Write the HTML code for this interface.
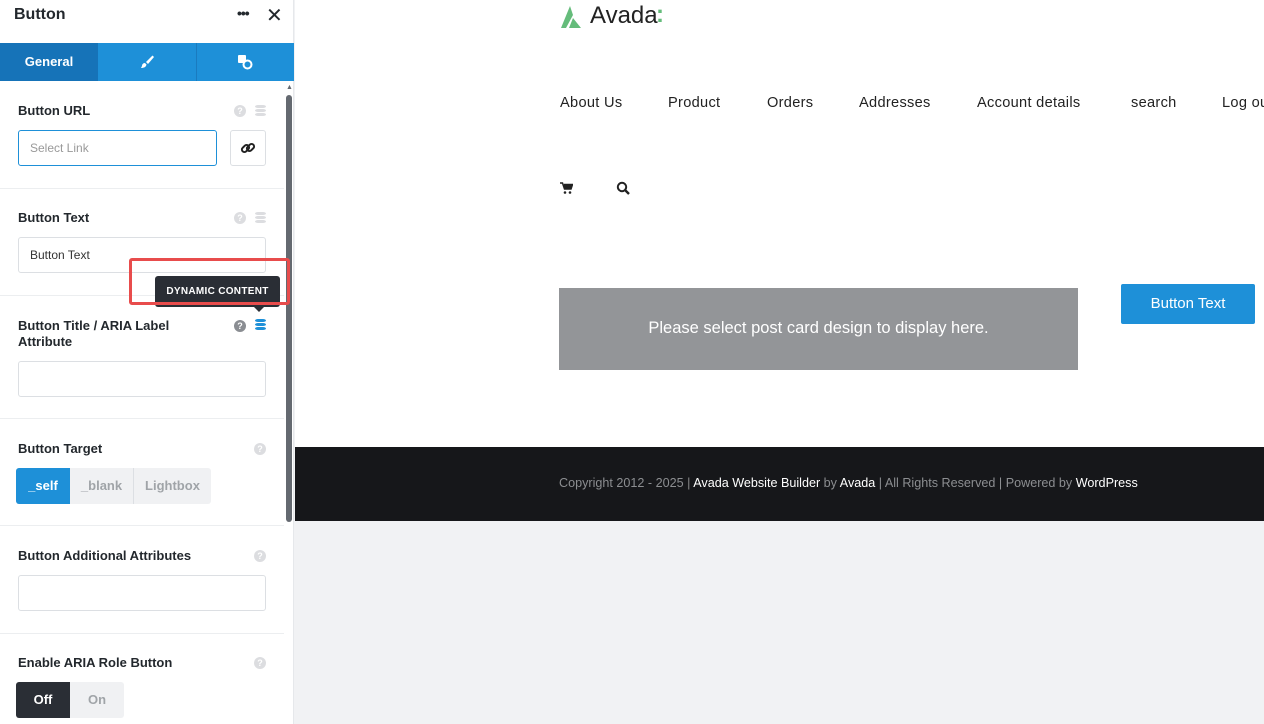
<!DOCTYPE html>
<html><head><meta charset="utf-8"><style>
*{box-sizing:border-box;margin:0;padding:0}
body{width:1264px;height:724px;overflow:hidden;font-family:"Liberation Sans",sans-serif;background:#f1f2f4;position:relative}
.panel{position:absolute;left:0;top:0;width:294px;height:724px;background:#fff;border-right:1px solid #e6e8eb}
.a{position:absolute}
.lbl{position:absolute;left:18px;font-size:13px;font-weight:bold;color:#23282d}
.inp{position:absolute;left:18px;width:248px;height:36px;border:1px solid #dcdfe3;border-radius:3px;background:#fff;font-size:12px;color:#333;padding:10px 11px}
.sep{position:absolute;left:0;width:284px;height:1px;background:#eceef0}
.q{position:absolute;width:12px;height:12px;border-radius:50%;background:#dcdde0;color:#fff;font-size:9px;font-weight:bold;text-align:center;line-height:12px}
.db{position:absolute;width:11px;height:13px}
.db i{display:block;height:3px;margin-bottom:1px;border-radius:3px/1.5px;background:#dcdde0}
.nav{position:absolute;top:95px;font-size:14.6px;color:#222;letter-spacing:.3px;white-space:nowrap}
</style></head><body>
<div class="panel">
 <div class="a" style="left:14px;top:6px;font-size:16px;font-weight:bold;color:#23282d">Button</div>
 <div class="a" style="left:237px;top:5px;font-size:14px;font-weight:bold;color:#23282d;letter-spacing:-1px">•••</div>
 <div class="a" style="left:266px;top:3px;font-size:20px;color:#23282d">✕</div>
 <div class="a" style="left:0;top:43px;width:294px;height:38px;background:#1e90d8"></div>
 <div class="a" style="left:0;top:43px;width:98px;height:38px;background:#1673b8;color:#fff;font-size:13px;font-weight:bold;text-align:center;line-height:38px">General</div>
 <div class="a" style="left:196px;top:43px;width:1px;height:38px;background:#1a7bbf"></div>
 <svg class="a" style="left:140px;top:55px" width="14" height="14" viewBox="0 0 14 14"><path d="M13 1 L12.5 0.5 L6 7 L8 9 L14 2Z" fill="#fff"/><path d="M5 8c-2 0-3 1.5-3 3L1 13c3 0 5-1 5.5-3.5z" fill="#fff"/></svg>
 <svg class="a" style="left:237px;top:54px" width="16" height="16" viewBox="0 0 16 16"><rect x="1" y="1" width="8" height="8" rx="1" fill="#fff"/><circle cx="10.5" cy="10.5" r="4" fill="#1e90d8" stroke="#fff" stroke-width="2"/></svg>
 <div class="a" style="left:286px;top:95px;width:6px;height:427px;background:#646970;border-radius:3px"></div>
 <div class="a" style="left:286px;top:84px;font-size:7px;color:#646970">▲</div>

 <div class="lbl" style="top:103px">Button URL</div>
 <div class="q" style="left:234px;top:105px">?</div><div class="db" style="left:255px;top:105px"><i></i><i></i><i></i></div>
 <div class="inp" style="top:130px;width:199px;border-color:#1e90d8;color:#999;border-width:1.5px">Select Link</div>
 <div class="a" style="left:230px;top:130px;width:36px;height:36px;border:1px solid #dcdfe3;border-radius:3px"></div>
 <svg class="a" style="left:240px;top:140px" width="16" height="16" viewBox="0 0 16 16"><rect x="1.5" y="6" width="8" height="5" rx="2.5" transform="rotate(-45 5.5 8.5)" fill="none" stroke="#222" stroke-width="2"/><rect x="6.5" y="5" width="8" height="5" rx="2.5" transform="rotate(-45 10.5 7.5)" fill="none" stroke="#222" stroke-width="2"/></svg>
 <div class="sep" style="top:188px"></div>

 <div class="lbl" style="top:210px">Button Text</div>
 <div class="q" style="left:234px;top:212px">?</div><div class="db" style="left:255px;top:212px"><i></i><i></i><i></i></div>
 <div class="inp" style="top:237px">Button Text</div>
 <div class="sep" style="top:295px"></div>

 <div class="lbl" style="top:318px;line-height:16px">Button Title / ARIA Label<br>Attribute</div>
 <div class="q" style="left:234px;top:320px;background:#8a8d92">?</div><div class="db" style="left:255px;top:319px"><i style="background:#1e90d8"></i><i style="background:#1e90d8"></i><i style="background:#1e90d8"></i></div>
 <div class="inp" style="top:361px"></div>
 <div class="sep" style="top:418px"></div>

 <div class="lbl" style="top:441px">Button Target</div>
 <div class="q" style="left:254px;top:443px">?</div>
 <div class="a" style="left:16px;top:468px;width:195px;height:36px;background:#f0f1f3;border-radius:3px;font-size:13px;font-weight:bold;color:#a0a4a8">
  <div class="a" style="left:0;top:0;width:54px;height:36px;background:#1e90d8;color:#fff;border-radius:3px 0 0 3px;text-align:center;line-height:36px">_self</div>
  <div class="a" style="left:54px;top:0;width:63px;text-align:center;line-height:36px">_blank</div>
  <div class="a" style="left:117px;top:0;width:1px;height:36px;background:#dcdfe3"></div>
  <div class="a" style="left:118px;top:0;width:77px;text-align:center;line-height:36px">Lightbox</div>
 </div>
 <div class="sep" style="top:525px"></div>

 <div class="lbl" style="top:548px">Button Additional Attributes</div>
 <div class="q" style="left:254px;top:550px">?</div>
 <div class="inp" style="top:575px"></div>
 <div class="sep" style="top:633px"></div>

 <div class="lbl" style="top:655px">Enable ARIA Role Button</div>
 <div class="q" style="left:254px;top:657px">?</div>
 <div class="a" style="left:16px;top:682px;width:108px;height:36px;background:#f0f1f3;border-radius:3px;font-size:13px;font-weight:bold;color:#a0a4a8">
  <div class="a" style="left:0;top:0;width:54px;height:36px;background:#2a2e35;color:#fff;border-radius:3px 0 0 3px;text-align:center;line-height:36px">Off</div>
  <div class="a" style="left:54px;top:0;width:54px;text-align:center;line-height:36px">On</div>
 </div>

 <div class="a" style="left:155px;top:276px;width:125px;height:31px;background:#2a2e35;border-radius:3px;color:#fff;font-size:10px;font-weight:bold;text-align:center;line-height:31px;letter-spacing:.3px">DYNAMIC CONTENT</div>
 <div class="a" style="left:254px;top:307px;width:0;height:0;border:5px solid transparent;border-top-color:#2a2e35"></div>
 <div class="a" style="left:129px;top:258px;width:161px;height:47px;border:3px solid #e84c4c;border-radius:3px"></div>
</div>

<div class="a" style="left:295px;top:0;width:969px;height:447px;background:#fff"></div>
<svg class="a" style="left:560px;top:5px" width="24" height="24" viewBox="0 0 24 24"><path d="M1 23 L10 1 L13 10 L6 23Z" fill="#65bc7b"/><path d="M9 23 L13 13 L21 23Z" fill="#65bc7b"/></svg>
<div class="a" style="left:590px;top:2px;font-size:24px;color:#222">Avada</div>
<div class="a" style="left:656px;top:1px;font-size:24px;color:#65bc7b;font-weight:bold">:</div>
<div class="nav" style="left:560px">About Us</div>
<div class="nav" style="left:668px">Product</div>
<div class="nav" style="left:767px">Orders</div>
<div class="nav" style="left:859px">Addresses</div>
<div class="nav" style="left:977px">Account details</div>
<div class="nav" style="left:1131px">search</div>
<div class="nav" style="left:1222px">Log out</div>
<svg class="a" style="left:560px;top:182px" width="13" height="12" viewBox="0 0 13 12"><path d="M0 1h2.5l2 6h6.5l1.5-4.5H4" fill="#222" stroke="#222" stroke-width="1.5"/><circle cx="5" cy="10.5" r="1.3" fill="#222"/><circle cx="10" cy="10.5" r="1.3" fill="#222"/></svg>
<svg class="a" style="left:616px;top:181px" width="14" height="14" viewBox="0 0 14 14"><circle cx="6" cy="6" r="4.2" fill="none" stroke="#222" stroke-width="2"/><path d="M9 9l4 4" stroke="#222" stroke-width="2.4"/></svg>
<div class="a" style="left:559px;top:288px;width:519px;height:82px;background:#939598;color:#fff;font-size:16.5px;text-align:center;line-height:80px">Please select post card design to display here.</div>
<div class="a" style="left:1121px;top:284px;width:134px;height:40px;background:#1e90d8;border-radius:2px;color:#fff;font-size:15px;text-align:center;line-height:40px">Button Text</div>
<div class="a" style="left:295px;top:447px;width:969px;height:74px;background:#16171a"></div>
<div class="a" style="left:559px;top:476px;font-size:12.6px;color:#8c8e91;white-space:nowrap">Copyright 2012 - 2025 <span style="color:#888">|</span> <span style="color:#fff">Avada Website Builder</span> by <span style="color:#fff">Avada</span> | All Rights Reserved | Powered by <span style="color:#fff">WordPress</span></div>
</body></html>
